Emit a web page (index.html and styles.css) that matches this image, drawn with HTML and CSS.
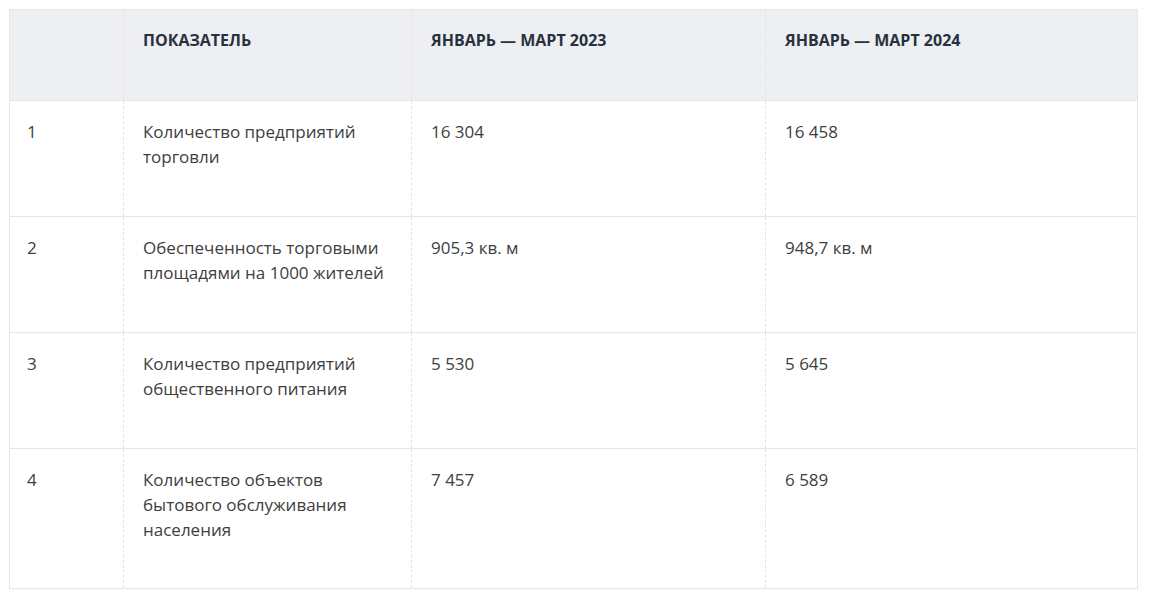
FILE: index.html
```html
<!DOCTYPE html>
<html lang="ru">
<head>
<meta charset="utf-8">
<link rel="stylesheet" href="styles.css">
</head>
<body>
<table class="data">
  <colgroup>
    <col class="c1"><col class="c2"><col class="c3"><col class="c4">
  </colgroup>
  <thead>
    <tr>
      <th></th>
      <th>Показатель</th>
      <th>Январь — март 2023</th>
      <th>Январь — март 2024</th>
    </tr>
  </thead>
  <tbody>
    <tr>
      <td>1</td>
      <td>Количество предприятий торговли</td>
      <td>16 304</td>
      <td>16 458</td>
    </tr>
    <tr>
      <td>2</td>
      <td>Обеспеченность торговыми площадями на 1000 жителей</td>
      <td>905,3 кв. м</td>
      <td>948,7 кв. м</td>
    </tr>
    <tr>
      <td>3</td>
      <td>Количество предприятий общественного питания</td>
      <td>5 530</td>
      <td>5 645</td>
    </tr>
    <tr>
      <td>4</td>
      <td>Количество объектов бытового обслуживания населения</td>
      <td>7 457</td>
      <td>6 589</td>
    </tr>
  </tbody>
</table>
</body>
</html>
```
FILE: styles.css
```css
html, body {
  margin: 0;
  padding: 0;
  background: #fff;
}
body {
  padding: 9px 20px 0 9px;
  font-family: "Open Sans", "Liberation Sans", sans-serif;
}
.data {
  width: 1128px;
  border-collapse: collapse;
  table-layout: fixed;
  border: 1px solid #e6e6e6;
}
.c1 { width: 114px; }
.c2 { width: 288px; }
.c3 { width: 354px; }
.c4 { width: 372px; }
.data th {
  background: #eeeff3;
  color: #28323e;
  font-size: 16px;
  font-weight: 700;
  text-transform: uppercase;
  text-align: left;
  line-height: 20px;
  padding: 20px 20px 50px 19px;
  vertical-align: top;
  border-left: 1px dashed #e3e3e6;
}
.data td {
  color: #404040;
  font-size: 17px;
  line-height: 25px;
  padding: 18px 20px 47px 19px;
  vertical-align: top;
  border-top: 1px solid #e6e6e6;
  border-left: 1px dashed #e3e3e3;
}
.data tbody tr:last-child td {
  padding-bottom: 46px;
}
.data th:first-child,
.data td:first-child {
  border-left: none;
  padding-left: 17px;
}
```
